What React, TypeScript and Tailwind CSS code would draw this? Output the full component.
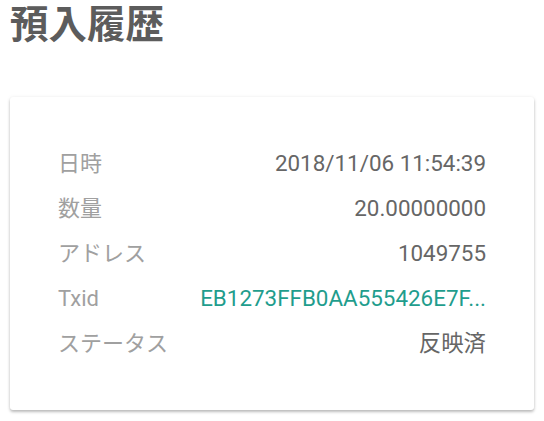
import React from 'react';

interface DetailRow {
  label: string;
  value: string;
  link?: boolean;
}

const rows: DetailRow[] = [
  { label: '日時', value: '2018/11/06 11:54:39' },
  { label: '数量', value: '20.00000000' },
  { label: 'アドレス', value: '1049755' },
  { label: 'Txid', value: 'EB1273FFB0AA555426E7F...', link: true },
  { label: 'ステータス', value: '反映済' },
];

const font = { fontFamily: 'Roboto, "Noto Sans CJK JP", sans-serif' };

function Row({ label, value, link }: DetailRow) {
  return (
    <div className="flex h-[45px] items-center justify-between text-[22px]">
      <span className="text-[#a0a0a0]">{label}</span>
      <span className={link ? 'text-[22.4px] text-[#1f9d8d]' : 'text-[22.4px] text-[#666666]'}>
        {value}
      </span>
    </div>
  );
}

export default function App() {
  return (
    <div className="h-[421px] w-[544px] bg-white" style={font}>
      <h1 className="pl-[10px] pt-[2px] text-[38.5px] font-bold leading-[45px] text-[#5c5c5c]">
        預入履歴
      </h1>
      <div className="mx-[10px] mt-[50px] rounded-[3px] bg-white px-12 py-11 shadow-[0_2px_3px_rgba(0,0,0,0.25),0_0_4px_rgba(0,0,0,0.06)]">
        {rows.map((row) => (
          <Row key={row.label} {...row} />
        ))}
      </div>
    </div>
  );
}
